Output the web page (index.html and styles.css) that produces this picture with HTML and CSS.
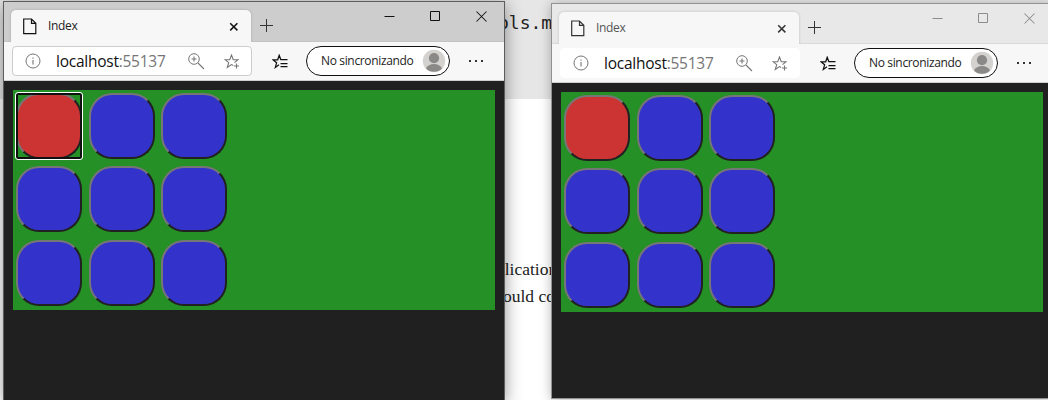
FILE: index.html
```html
<!DOCTYPE html>
<html lang="es">
<head>
<meta charset="utf-8">
<title>Index</title>
<link rel="stylesheet" href="styles.css">
</head>
<body>
<svg width="0" height="0" class="defs">
  <symbol id="page" viewBox="0 0 14 17"><path d="M.7 1h7.8l4.3 4.3v10.4H.7zM8.5 1v4.3h4.3" fill="none" stroke="currentColor" stroke-width="1.2"/></symbol>
  <symbol id="close" viewBox="0 0 10 10"><path d="M1.2 1.2l7.2 7.2M8.4 1.2L1.2 8.4" fill="none" stroke="currentColor" stroke-width="1.5"/></symbol>
  <symbol id="plus" viewBox="0 0 13 13"><path d="M6.5 0v13M0 6.5h13" fill="none" stroke="currentColor"/></symbol>
  <symbol id="info" viewBox="0 0 16 16"><circle cx="8" cy="8" r="7" fill="none" stroke="currentColor"/><path d="M8 7v4.5M8 4.5v1.2" stroke="currentColor" stroke-width="1.1"/></symbol>
  <symbol id="zoom" viewBox="0 0 17 17"><circle cx="6" cy="6" r="5.3" fill="none" stroke="currentColor"/><path d="M3.5 6h5M6 3.5v5M10 10l6 6" fill="none" stroke="currentColor" stroke-width="1.1"/></symbol>
  <symbol id="star-add" viewBox="0 0 17 16"><path d="M9.2 11.5L7.5 10.6 3.3 13.5 4.7 8.6 1 5.7h4.7L7.5 1l1.8 4.7H14l-3.5 3" fill="none" stroke="currentColor" stroke-width="1.1"/><path d="M12.500 9.500v5M10 12h5" stroke="currentColor" stroke-width="1.1"/></symbol>
  <symbol id="favorites" viewBox="0 0 17 16"><path d="M7 10.8L3.3 13.4 4.6 8.8 1 5.800h4.700L7.200 1.300l1.600 4.200h6.700M8.500 9.500h7M8.500 12.500h7" fill="none" stroke="currentColor" stroke-width="1.25"/></symbol>
  <symbol id="avatar" viewBox="0 0 24 24"><circle cx="12" cy="12" r="11.2" fill="#d4d2ce"/><circle cx="12" cy="9.2" r="5.1" fill="#8b8987"/><path d="M4 19.6c1.4-3 4.4-4.5 8-4.5s6.600 1.500 8 4.500c-4 4.300-12 4.300-16 0z" fill="#8b8987"/></symbol>
  <symbol id="minimize" viewBox="0 0 11 11"><path d="M.5 5.500h10" stroke="currentColor"/></symbol>
  <symbol id="maximize" viewBox="0 0 11 11"><path d="M.5.5h9v9h-9z" fill="none" stroke="currentColor"/></symbol>
  <symbol id="exit" viewBox="0 0 11 11"><path d="M.5.5l10 10M10.500.5l-10 10" stroke="currentColor" stroke-width="1.05"/></symbol>
</svg>

<div class="desktop">
  <div class="document">
    <div class="code-band"><code>ols.m</code></div>
    <p class="first">plication</p>
    <p class="second">ould cod</p>
  </div>

  <section class="window window-active">
    <header class="tabstrip">
      <div class="tab"><svg class="page"><use href="#page"/></svg><span>Index</span><svg class="close"><use href="#close"/></svg></div>
      <svg class="plus"><use href="#plus"/></svg>
      <div class="controls"><svg><use href="#minimize"/></svg><svg><use href="#maximize"/></svg><svg><use href="#exit"/></svg></div>
    </header>
    <nav class="toolbar">
      <div class="address"><svg class="info"><use href="#info"/></svg><span class="url">localhost<i>:55137</i></span><svg class="zoom"><use href="#zoom"/></svg><svg class="star"><use href="#star-add"/></svg></div>
      <svg class="favorites"><use href="#favorites"/></svg>
      <div class="profile"><span>No sincronizando</span><svg><use href="#avatar"/></svg></div>
      <div class="more"><b></b><b></b><b></b></div>
    </nav>
    <main class="page-body">
      <div class="board">
        <button class="cell red focused"></button><button class="cell"></button><button class="cell"></button>
        <button class="cell"></button><button class="cell"></button><button class="cell"></button>
        <button class="cell"></button><button class="cell"></button><button class="cell"></button>
      </div>
    </main>
  </section>

  <section class="window window-inactive">
    <header class="tabstrip">
      <div class="tab"><svg class="page"><use href="#page"/></svg><span>Index</span><svg class="close"><use href="#close"/></svg></div>
      <svg class="plus"><use href="#plus"/></svg>
      <div class="controls"><svg><use href="#minimize"/></svg><svg><use href="#maximize"/></svg><svg><use href="#exit"/></svg></div>
    </header>
    <nav class="toolbar">
      <div class="address"><svg class="info"><use href="#info"/></svg><span class="url">localhost<i>:55137</i></span><svg class="zoom"><use href="#zoom"/></svg><svg class="star"><use href="#star-add"/></svg></div>
      <svg class="favorites"><use href="#favorites"/></svg>
      <div class="profile"><span>No sincronizando</span><svg><use href="#avatar"/></svg></div>
      <div class="more"><b></b><b></b><b></b></div>
    </nav>
    <main class="page-body">
      <div class="board">
        <button class="cell red"></button><button class="cell"></button><button class="cell"></button>
        <button class="cell"></button><button class="cell"></button><button class="cell"></button>
        <button class="cell"></button><button class="cell"></button><button class="cell"></button>
      </div>
    </main>
  </section>
</div>
</body>
</html>
```
FILE: styles.css
```css
* { box-sizing: border-box; }
body { margin: 0; overflow: hidden; font-family: "Open Sans", "Noto Sans", sans-serif; }
.defs { position: absolute; }
svg { display: block; flex: none; }

.desktop { position: relative; width: 1048px; height: 400px; overflow: hidden; background: #fff; }

.document { color: #222; font: 17.5px/27px "Liberation Serif", serif; }
.code-band { height: 99px; padding: 9px 0 0 498px; background: #e6e6e6; }
.code-band code { display: block; font: 18px/27px "DejaVu Sans Mono", monospace; color: #222; white-space: pre; }
.document p { margin: 0; white-space: nowrap; }
.document .first { margin-top: 157px; padding-left: 496px; }
.document .second { padding-left: 503px; }

/* Browser windows */
.window { position: absolute; width: 502px; display: flex; flex-direction: column; border: 1px solid #5c5e5c; }
.window-active { left: 3px; top: 1px; height: 400px; box-shadow: 0 3px 16px rgba(0,0,0,.42); }
.window-inactive { left: 551px; top: 3px; height: 396px; border-color: #929292; box-shadow: 0 1px 11px rgba(0,0,0,.28); }

.tabstrip { height: 40px; flex: none; display: flex; padding: 8px 0 0 7px; background: #cdcdcd; color: #111; border-bottom: 1px solid #c4c4c4; }
.tab { width: 240px; height: 32px; display: flex; padding: 0 12px; background: #f7f7f7; border-radius: 5px 5px 0 0; box-shadow: 0 0 3px rgba(0,0,0,.18); clip-path: inset(-4px -4px 0 -4px); }
.tab .page { width: 14px; height: 17px; margin-top: 8px; color: #111; }
.tab span { margin: 7px 0 0 11px; font-size: 12px; line-height: 18px; letter-spacing: -.35px; color: #222; }
.close { width: 10px; height: 10px; margin: 12px 0 0 auto; }
.plus { width: 13px; height: 13px; margin: 9px 0 0 9px; color: #333; }
.controls { display: flex; gap: 35px; margin: 0 17px 0 auto; }
.controls svg { width: 11px; height: 11px; margin-top: 1px; }

.toolbar { height: 39px; flex: none; display: flex; padding: 4px 0 0 8px; background: #f7f7f7; border-bottom: 1px solid #d0d0d0; }
.address { width: 240px; height: 30px; display: flex; padding-left: 14px; background: #fff; border: 1px solid #cdcdcd; border-radius: 4px; color: #767676; }
.info { width: 16px; height: 16px; margin: 6px 0 0 -2px; }
.url { width: 112px; margin: 3px 0 0 15px; font-size: 15.5px; line-height: 22px; letter-spacing: -.25px; color: #111; white-space: nowrap; }
.url i { font-style: normal; color: #767676; }
.zoom { width: 17px; height: 17px; margin: 6px 0 0 20px; }
.star { width: 17px; height: 16px; margin: 7px 0 0 19px; }
.favorites { width: 17px; height: 16px; margin: 8px 0 0 20px; color: #111; }
.profile { width: 144px; height: 30px; margin-left: 17px; display: flex; padding-left: 14px; border: 1px solid #111; border-radius: 15px; background: #fff; color: #222; }
.profile span { width: 94px; margin-top: 5px; font-size: 12px; line-height: 18px; letter-spacing: -.35px; white-space: nowrap; }
.profile svg { width: 24px; height: 24px; margin: 2px 0 0 7px; }
.more { display: flex; gap: 4px; margin: 14px 0 0 19px; }
.more b { width: 2px; height: 2px; background: #333; }

.window-inactive .tabstrip { background: #e8e8e8; border-bottom-color: #d9d9d9; color: #8c8c8c; }
.window-inactive .tab .page, .window-inactive .close { color: #333; }
.window-inactive .tab span { color: #555; }
.window-inactive .address { border-color: #fff; }

/* Button board */
.page-body { flex: 1; padding: 9px; background: #202020; }
.board { width: 482px; height: 220px; display: grid; grid-template-columns: 73px 72px 66px; grid-template-rows: 73px 74px 66px; padding: 3px; background: #259025; }
.cell { position: relative; width: 66px; height: 66px; padding: 0; border: 2px solid; border-color: #767676 #212121 #212121 #767676; border-radius: 23px; background: #3333cc; }
.red { background: #cc3333; }
.focused::after { content: ""; position: absolute; inset: -3px; border: 1px solid #fff; border-radius: 3px; box-shadow: inset 0 0 0 2px #101010; }
```
